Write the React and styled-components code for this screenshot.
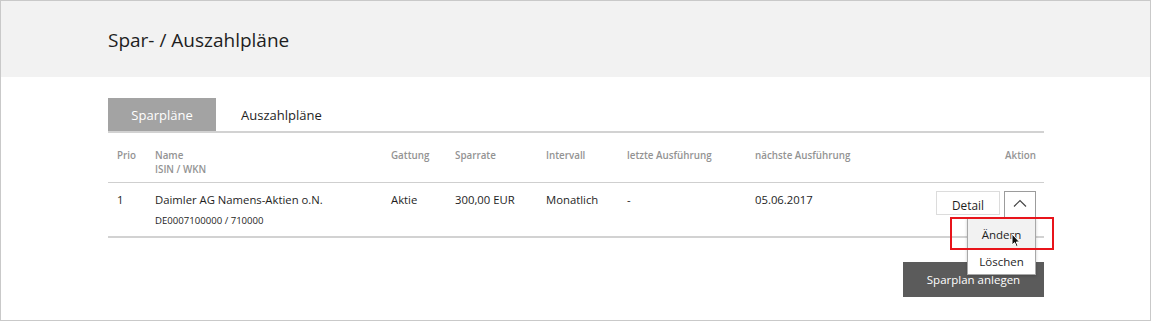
import React from "react";
import styled, { createGlobalStyle } from "styled-components";

const Global = createGlobalStyle`
  html, body { margin: 0; padding: 0; background: #fff; }
  body { font-family: "Open Sans", "Noto Sans", Arial, sans-serif; color: #222; }
`;

const Frame = styled.div`
  box-sizing: border-box;
  width: 1151px;
  height: 321px;
  border: 1px solid #c9c9c9;
  background: #fff;
  position: relative;
  overflow: hidden;
`;

const HeaderBand = styled.div`
  height: 76px;
  background: #f2f2f2;
  display: flex;
  align-items: center;
  padding-left: 107px;
`;

const Title = styled.h1`
  margin: 0;
  padding-top: 2px;
  font-size: 19px;
  font-weight: 400;
  color: #1e1e1e;
`;

const Content = styled.div`
  width: 936px;
  margin-left: 107px;
  padding-top: 21px;
`;

const TabBar = styled.div`
  display: flex;
  border-bottom: 2px solid #d2d2d2;
`;

const Tab = styled.div`
  height: 33px;
  display: flex;
  align-items: center;
  justify-content: center;
  font-size: 13px;
  padding: 0 24px 0 ${(p) => (p.$active ? "24px" : "25px")};
  width: ${(p) => (p.$active ? "108px" : "auto")};
  box-sizing: border-box;
  background: ${(p) => (p.$active ? "#a3a3a3" : "transparent")};
  color: ${(p) => (p.$active ? "#fff" : "#1e1e1e")};
`;

const Row = styled.div`
  display: grid;
  grid-template-columns: 38px 236px 64px 91px 81px 128px 1fr auto;
  padding: 0 8px 0 9px;
  border-bottom: ${(p) => p.$border};
  height: ${(p) => p.$h}px;
  box-sizing: border-box;
  padding-top: ${(p) => p.$pt}px;
`;

const HeadCell = styled.div`
  font-size: 9.8px;
  line-height: 14px;
  font-weight: 600;
  color: #939393;
  text-align: ${(p) => (p.$right ? "right" : "left")};
`;

const Cell = styled.div`
  font-size: 11.3px;
  line-height: 18px;
  color: #1e1e1e;
`;

const SubText = styled.div`
  font-size: 9.6px;
  line-height: 14px;
  margin-top: 5px;
  color: #1e1e1e;
`;

const ActionCell = styled.div`
  display: flex;
  align-items: flex-start;
  gap: 4px;
  position: relative;
`;

const DetailButton = styled.div`
  box-sizing: border-box;
  width: 64px;
  height: 24px;
  border: 1px solid #dcdcdc;
  display: flex;
  align-items: center;
  justify-content: center;
  padding-top: 3px;
  font-size: 11.8px;
  color: #1e1e1e;
  background: #fff;
`;

const ToggleButton = styled.div`
  box-sizing: border-box;
  width: 32px;
  height: 27px;
  border: 1px solid #9c9c9c;
  border-bottom: none;
  display: flex;
  align-items: center;
  justify-content: center;
  background: #fff;
  padding-bottom: 4px;
`;

const Menu = styled.div`
  position: absolute;
  top: 27px;
  right: 0;
  width: 69px;
  box-sizing: border-box;
  background: #fff;
  border: 1px solid #a8a8a8;
  box-shadow: 0 1px 3px rgba(0, 0, 0, 0.2);
  z-index: 2;
`;

const MenuItem = styled.div`
  height: ${(p) => p.$h}px;
  display: flex;
  align-items: center;
  justify-content: center;
  font-size: 11.5px;
  color: #1e1e1e;
  background: ${(p) => (p.$hover ? "#f2f2f2" : "#fff")};
`;

const Highlight = styled.div`
  position: absolute;
  top: -2px;
  left: -18px;
  width: 104px;
  height: 33px;
  box-sizing: border-box;
  border: 2px solid #e8141b;
  z-index: 3;
  pointer-events: none;
`;

const Cursor = styled.svg`
  position: absolute;
  left: 43px;
  top: 14px;
  z-index: 4;
`;

const Footer = styled.div`
  display: flex;
  justify-content: flex-end;
  padding-top: 24px;
`;

const PrimaryButton = styled.div`
  width: 141px;
  height: 35px;
  background: #5b5b5b;
  color: #fff;
  font-size: 11.5px;
  display: flex;
  align-items: center;
  justify-content: center;
`;

const MenuWrap = styled.div`
  position: relative;
`;

export default function App() {
  return (
    <>
      <Global />
      <Frame>
        <HeaderBand>
          <Title>Spar- / Auszahlpläne</Title>
        </HeaderBand>
        <Content>
          <TabBar>
            <Tab $active>Sparpläne</Tab>
            <Tab>Auszahlpläne</Tab>
          </TabBar>
          <Row $h={50} $pt={16} $border="1px solid #cfcfcf">
            <HeadCell>Prio</HeadCell>
            <HeadCell>
              Name
              <br />
              ISIN / WKN
            </HeadCell>
            <HeadCell>Gattung</HeadCell>
            <HeadCell>Sparrate</HeadCell>
            <HeadCell>Intervall</HeadCell>
            <HeadCell>letzte Ausführung</HeadCell>
            <HeadCell>nächste Ausführung</HeadCell>
            <HeadCell $right>Aktion</HeadCell>
          </Row>
          <Row $h={55} $pt={8} $border="2px solid #d2d2d2">
            <Cell>1</Cell>
            <Cell>
              Daimler AG Namens-Aktien o.N.
              <SubText>DE0007100000 / 710000</SubText>
            </Cell>
            <Cell>Aktie</Cell>
            <Cell>300,00 EUR</Cell>
            <Cell>Monatlich</Cell>
            <Cell>-</Cell>
            <Cell>05.06.2017</Cell>
            <ActionCell>
              <DetailButton>Detail</DetailButton>
              <MenuWrap>
                <ToggleButton>
                  <svg width="14" height="8" viewBox="0 0 14 8">
                    <path d="M1 7.5 L7 1.5 L13 7.5" fill="none" stroke="#444" strokeWidth="1.2" />
                  </svg>
                </ToggleButton>
                <Menu>
                  <MenuItem $h={30} $hover>
                    Ändern
                  </MenuItem>
                  <MenuItem $h={25}>Löschen</MenuItem>
                  <Highlight />
                  <Cursor width="10" height="15" viewBox="0 0 10 15">
                    <path d="M1 1 L1 12 L3.6 9.6 L5.4 13.6 L7 12.9 L5.3 9 L8.6 9 Z" fill="#111" stroke="#fff" strokeWidth="1" />
                  </Cursor>
                </Menu>
              </MenuWrap>
            </ActionCell>
          </Row>
          <Footer>
            <PrimaryButton>Sparplan anlegen</PrimaryButton>
          </Footer>
        </Content>
      </Frame>
    </>
  );
}
